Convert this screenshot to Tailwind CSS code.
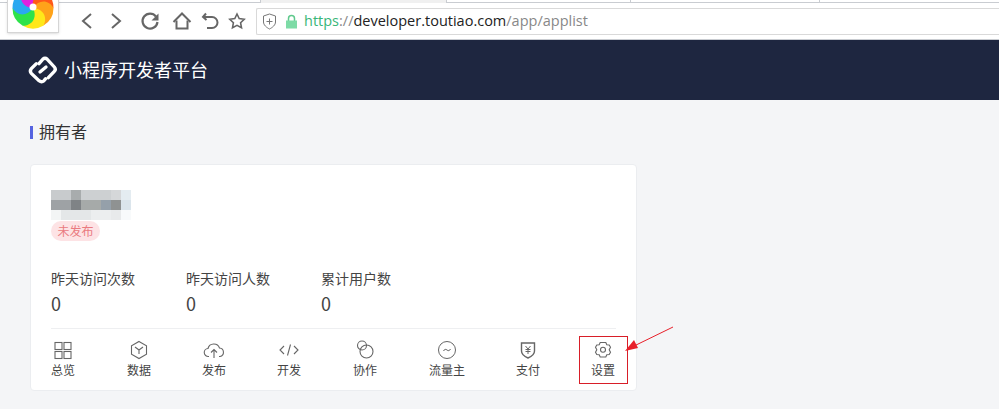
<!DOCTYPE html>
<html lang="zh-CN">

<head>
    <meta charset="UTF-8" />
    <title>小程序开发者平台</title>
    <script src="https://cdn.jsdelivr.net/npm/@tailwindcss/browser@4"></script>
</head>

<body class="relative w-[999px] h-[409px] overflow-hidden bg-[#f4f5f7] font-['Noto_Sans_CJK_SC','Noto_Sans',sans-serif]">
    <!-- browser toolbar -->
    <div class="relative h-10 bg-white border-b border-[#c9ccd1]">
        <div class="flex h-[3px] border-b border-[#c9ccd1]">
            <div class="ml-[260px] w-[187px] h-[3px] border-l border-r border-[#c9ccd1] bg-[#f0f0f0]"></div>
            <div class="ml-[183px] w-[190px] h-[3px] border-l border-r border-[#c9ccd1]"></div>
        </div>
        <div class="flex items-center h-[36px] pl-[80px] text-[#666]">
            <svg class="w-[14px] h-[18px]" viewBox="0 0 14 18" fill="none" stroke="#666" stroke-width="2"><path d="M11 2 3 9l8 7" /></svg>
            <svg class="ml-[15px] w-[14px] h-[18px]" viewBox="0 0 14 18" fill="none" stroke="#666" stroke-width="2"><path d="m3 2 8 7-8 7" /></svg>
            <svg class="ml-[17px] w-[20px] h-[20px]" viewBox="0 0 20 20" fill="none" stroke="#666" stroke-width="2.200"><path d="M16 5.500A7.500 7.500 0 1 0 17.500 11" /><path d="M18.500 2.500v7h-7z" fill="#666" stroke="none" /></svg>
            <svg class="ml-[12px] w-[20px] h-[20px]" viewBox="0 0 20 20" fill="none" stroke="#666" stroke-width="2"><path d="M1.500 11 10 2.500l8.500 8.500" /><path d="M4.500 9.500v8h11v-8" /></svg>
            <svg class="ml-[9px] w-[18px] h-[18px]" viewBox="0 0 18 18" fill="none" stroke="#666" stroke-width="2"><path d="M5 1.500 2 5l3.500 3" /><path d="M2.500 5H11a5 5 0 0 1 0 11H6" /></svg>
            <svg class="ml-[9px] w-[18px] h-[18px]" viewBox="0 0 18 18" fill="none" stroke="#666" stroke-width="1.600"><path d="m9 2 2.200 4.600 5 .7-3.600 3.500.9 5L9 13.400 4.500 15.800l.9-5L1.800 7.300l5-.7z" /></svg>
            <div class="ml-[10px] flex items-center w-[743px] h-[27px] bg-white border border-[#d9d9d9] border-r-0 rounded-l-[2px] pl-[5px]">
                <svg class="w-[15px] h-[17px]" viewBox="0 0 15 17" fill="none" stroke="#777" stroke-width="1"><path d="M7.500 1 13.500 3v6c0 3-3 5.500-6 7-3-1.500-6-4-6-7V3z" /><path d="M7.500 5.500v6M4.500 8.500h6" /></svg>
                <svg class="ml-[8px] w-[13px] h-[15px]" viewBox="0 0 13 15"><path d="M3.500 7V4.500a3 3 0 0 1 6 0V7" fill="none" stroke="#5fc98d" stroke-width="1.500" /><rect x="1" y="6.500" width="11" height="8" fill="#7ddba6" /></svg>
                <div class="ml-[6px] text-[14.500px] leading-[20px] font-['Open_Sans',sans-serif] whitespace-nowrap"><span class="text-[#39b678]">https</span><span class="text-[#888]">://</span><span class="text-[#222]">developer.toutiao.com</span><span class="text-[#888]">/app/applist</span></div>
            </div>
        </div>
    </div>

    <!-- browser logo sticker -->
    <div class="absolute left-[7px] top-0 w-[52px] h-[33px] bg-white border border-t-0 border-[#d5d5d5] shadow-sm overflow-hidden">
        <svg class="absolute left-[4px] top-[-13px] w-[42px] h-[42px]" viewBox="-21 -21 42 42">
            <g id="wheel">
                <path transform="rotate(30)" d="M0 0C-9-6-8-16 0-20.500A20.500 20.500 0 0 1 17.800-10.200C10-12 3-8 0 0z" fill="#ff5a1a" />
                <path transform="rotate(90)" d="M0 0C-9-6-8-16 0-20.500A20.500 20.500 0 0 1 17.800-10.200C10-12 3-8 0 0z" fill="#ffa31a" />
                <path transform="rotate(150)" d="M0 0C-9-6-8-16 0-20.500A20.500 20.500 0 0 1 17.800-10.200C10-12 3-8 0 0z" fill="#ffe81a" />
                <path transform="rotate(210)" d="M0 0C-9-6-8-16 0-20.500A20.500 20.500 0 0 1 17.800-10.200C10-12 3-8 0 0z" fill="#2ee24a" />
                <path transform="rotate(270)" d="M0 0C-9-6-8-16 0-20.500A20.500 20.500 0 0 1 17.800-10.200C10-12 3-8 0 0z" fill="#2aa8f0" />
                <path transform="rotate(330)" d="M0 0C-9-6-8-16 0-20.500A20.500 20.500 0 0 1 17.800-10.200C10-12 3-8 0 0z" fill="#e020e0" />
            </g>
            <circle cx="0" cy="-1" r="3.500" fill="#fff" />
        </svg>
    </div>

    <!-- platform header -->
    <header class="flex items-center h-[60px] bg-[#1e2640] pl-[25px]">
        <svg class="w-[36px] h-[36px]" viewBox="0 0 108 108" fill="none" stroke="#fff" stroke-width="10" stroke-linecap="round">
            <path d="M42 35 53 22Q60 16 67 22L88 45Q94 52 88 58L70 77" />
            <path d="M34 35 19 50Q13 57 19 64L42 86Q50 92 57 86L62 80" />
            <path d="M45 60 63 45" />
        </svg>
        <div class="ml-[3px] pb-[3px] text-[18px] leading-[26px] text-white">小程序开发者平台</div>
    </header>

    <!-- owner section -->
    <main class="pl-[30px] pt-[24px]">
        <div class="flex items-center h-[16px]">
            <div class="w-[3px] h-[13px] bg-[#5563e0]"></div>
            <div class="ml-[6px] pb-[2px] text-[16px] leading-[16px] text-[#333]">拥有者</div>
        </div>

        <section class="mt-[24px] w-[607px] h-[227px] bg-white border border-[#ebedf0] rounded-[4px] px-[20px]">
            <!-- pixelated app name -->
            <div class="mt-[25px] grid grid-cols-8 grid-rows-3 w-[80px] h-[30px] blur-[0.5px]">
                <div class="bg-[#c8cbcd]"></div><div class="bg-[#c8cbcd]"></div><div class="bg-[#a8acad]"></div><div class="bg-[#cdd0d2]"></div><div class="bg-[#cdd0d2]"></div><div class="bg-[#cdd0d2]"></div><div class="bg-[#d5d7d9]"></div><div class="bg-[#e4ecf1]"></div>
                <div class="bg-[#9ea2a5]"></div><div class="bg-[#9ea2a5]"></div><div class="bg-[#7f8386]"></div><div class="bg-[#a6aaa9]"></div><div class="bg-[#a6aaa9]"></div><div class="bg-[#95a0aa]"></div><div class="bg-[#8f9292]"></div><div class="bg-[#dbe5ec]"></div>
                <div class="bg-[#f3f5f5]"></div><div class="bg-[#e4e7e8]"></div><div class="bg-[#e4e7e8]"></div><div class="bg-[#e4e7e8]"></div><div class="bg-[#eceeef]"></div><div class="bg-[#eceeef]"></div><div class="bg-[#e8eaeb]"></div><div class="bg-[#f8fafb]"></div>
            </div>
            <div class="mt-[1px] w-[49px] h-[20px] rounded-[10px] bg-[#fde3e5] text-center text-[12px] leading-[20px] text-[#ea7a80]">未发布</div>

            <div class="mt-[28px] flex h-[59px]">
                <div class="w-[135px]">
                    <div class="text-[14px] leading-[18px] text-[#444]">昨天访问次数</div>
                    <div class="mt-[5px] text-[18px] leading-[22px] text-[#444]">0</div>
                </div>
                <div class="w-[135px]">
                    <div class="text-[14px] leading-[18px] text-[#444]">昨天访问人数</div>
                    <div class="mt-[5px] text-[18px] leading-[22px] text-[#444]">0</div>
                </div>
                <div class="w-[135px]">
                    <div class="text-[14px] leading-[18px] text-[#444]">累计用户数</div>
                    <div class="mt-[5px] text-[18px] leading-[22px] text-[#444]">0</div>
                </div>
            </div>

            <div class="h-px bg-[#eeeff1]"></div>

            <!-- actions, each box is centred on its label -->
            <div class="flex pt-[11px] text-[12px] leading-[16px] text-[#444]">
                <div class="flex flex-col items-center w-[24px]">
                    <svg class="w-[20px] h-[20px]" viewBox="0 0 20 20" fill="none" stroke="#666" stroke-width="1.100"><rect x="2" y="2.500" width="7" height="7" /><rect x="11" y="2.500" width="7" height="7" /><rect x="2" y="11.500" width="7" height="7" /><rect x="11" y="11.500" width="7" height="7" /></svg>
                    <div class="mt-[2px] whitespace-nowrap">总览</div>
                </div>
                <div class="flex flex-col items-center w-[24px] ml-[52px]">
                    <svg class="w-[20px] h-[20px]" viewBox="0 0 20 20" fill="none" stroke="#666" stroke-width="1.100"><path d="M10 1.500 17.500 5.700v8.600L10 18.500l-7.500-4.200V5.700z" /><path d="M6 7l4 3 4-3M10 10v4" /></svg>
                    <div class="mt-[2px] whitespace-nowrap">数据</div>
                </div>
                <div class="flex flex-col items-center w-[24px] ml-[51px]">
                    <svg class="w-[22px] h-[20px]" viewBox="0 0 22 20" fill="none" stroke="#666" stroke-width="1.100"><path d="M6 16.500H5.500a4 4 0 0 1-.5-8 6 6 0 0 1 11.500-.5 4.300 4.300 0 0 1 .5 8.500H16" /><path d="M11 18V10M8 12.500l3-3 3 3" /></svg>
                    <div class="mt-[2px] whitespace-nowrap">发布</div>
                </div>
                <div class="flex flex-col items-center w-[24px] ml-[51px]">
                    <svg class="w-[22px] h-[20px]" viewBox="0 0 22 20" fill="none" stroke="#666" stroke-width="1.100"><path d="M6 6 2 10l4 4M16 6l4 4-4 4M12.500 4.500l-3 11" /></svg>
                    <div class="mt-[2px] whitespace-nowrap">开发</div>
                </div>
                <div class="flex flex-col items-center w-[24px] ml-[52px]">
                    <svg class="w-[20px] h-[20px]" viewBox="0 0 20 20" fill="none" stroke="#666" stroke-width="1.100"><circle cx="7" cy="5.500" r="4.500" /><circle cx="11.500" cy="11.500" r="6.500" /></svg>
                    <div class="mt-[2px] whitespace-nowrap">协作</div>
                </div>
                <div class="flex flex-col items-center w-[24px] ml-[58px]">
                    <svg class="w-[20px] h-[20px]" viewBox="0 0 20 20" fill="none" stroke="#666" stroke-width="1"><circle cx="10" cy="10" r="8.500" /><path d="M6.500 11c1-2 2.300-2 3.500-1s2.500 1 3.500-1" /></svg>
                    <div class="mt-[2px] whitespace-nowrap">流量主</div>
                </div>
                <div class="flex flex-col items-center w-[24px] ml-[57px]">
                    <svg class="w-[20px] h-[20px]" viewBox="0 0 20 20" fill="none" stroke="#666" stroke-width="1.400"><path d="M3.500 3h13v8c0 3-3 5.500-6.500 7-3.500-1.500-6.500-4-6.500-7z" /><path d="M7.500 6 10 9l2.500-3M7.500 9.500h5M7.500 11.500h5M10 9v5" stroke-width="1" /></svg>
                    <div class="mt-[2px] whitespace-nowrap">支付</div>
                </div>
                <div class="flex flex-col items-center w-[24px] ml-[51px]">
                    <svg class="w-[20px] h-[20px]" viewBox="0 0 20 20" fill="none" stroke="#666" stroke-width="1.100"><path d="M7.200 2.500h5.600l1 2.200 2.400.2 1.300 2.300-1.300 2.500 1.300 2.500-1.300 2.300-2.400.2-1 2.300H7.200l-1-2.300-2.400-.2-1.300-2.300 1.300-2.500-1.300-2.500 1.300-2.300 2.400-.2z" /><circle cx="10" cy="9.800" r="2.500" /></svg>
                    <div class="mt-[2px] whitespace-nowrap">设置</div>
                </div>
            </div>
        </section>
    </main>

    <!-- annotation over the screenshot -->
    <div class="absolute left-[579px] top-[336px] w-[49px] h-[48px] border border-[#d81e28]"></div>
    <svg class="absolute left-[620px] top-[322px] w-[56px] h-[34px]" viewBox="0 0 56 34" fill="none">
        <path d="M53 5 12 25" stroke="#e8202a" stroke-width="1" />
        <path d="M5 29 14 18l4 8z" fill="#e8202a" />
    </svg>
</body>

</html>
